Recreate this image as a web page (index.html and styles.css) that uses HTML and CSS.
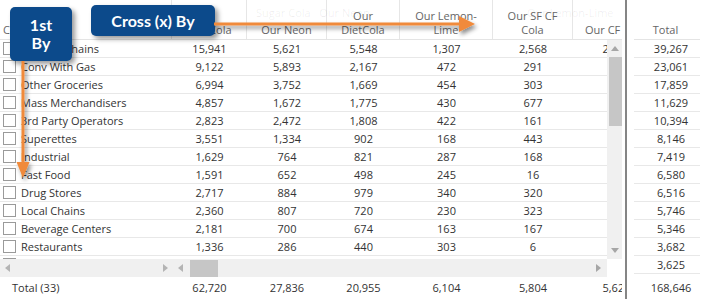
FILE: index.html
```html
<!DOCTYPE html>
<html lang="en">
<head>
  <meta charset="UTF-8" />
  <title>Channel by Brand</title>
  <link rel="stylesheet" href="styles.css">
</head>
<body>

  <div class="grid">
    <div class="pane">
      <div class="head">
        <div class="hcell first">Channel</div>
        <div class="hcell">Our Cola</div>
        <div class="hcell">Our Neon</div>
        <div class="hcell">Our<br>DietCola</div>
        <div class="hcell">Our Lemon-<br>Lime</div>
        <div class="hcell">Our SF CF<br>Cola</div>
        <div class="hcell cf">Our CF</div>
        <span class="ghost g1">Sugar Cola &nbsp; Our Neon</span>
        <span class="ghost g2">Our Lemon-Lime</span>
      </div>

      <div class="body">
        <div class="rows" id="rows"></div>
        <div class="vscroll">
          <div class="vbtn"><svg width="8" height="5"><polygon points="0,5 4,0 8,5" fill="#a6a6a6"/></svg></div>
          <div class="vthumb"></div>
          <div class="vspace"></div>
          <div class="vbtn"><svg width="8" height="5"><polygon points="0,0 8,0 4,5" fill="#a6a6a6"/></svg></div>
        </div>
      </div>

      <div class="hscroll">
        <div class="htrack frozen">
          <div class="hbtn"><svg width="5" height="8"><polygon points="5,0 5,8 0,4" fill="#b4b4b4"/></svg></div>
          <div class="hbtn"><svg width="5" height="8"><polygon points="0,0 0,8 5,4" fill="#b4b4b4"/></svg></div>
        </div>
        <div class="htrack scrolling">
          <div class="hbtn wide"><svg width="5" height="8"><polygon points="5,0 5,8 0,4" fill="#b4b4b4"/></svg></div>
          <div class="hthumb"></div>
          <div class="hspace"></div>
          <div class="hbtn wide"><svg width="5" height="8"><polygon points="0,0 0,8 5,4" fill="#a6a6a6"/></svg></div>
        </div>
      </div>

      <div class="foot" id="foot"></div>
    </div>

    <div class="divider"></div>

    <div class="totals">
      <div class="thead">Total</div>
      <div id="totalRows"></div>
      <div class="tfoot">168,646</div>
    </div>

    <!-- drop targets shown while pivoting -->
    <div class="tag tag-by">1st<br>By</div>
    <div class="tag tag-cross">Cross (x) By</div>
    <svg class="arrows" width="704" height="299">
      <defs>
        <filter id="shade" x="-20%" y="-50%" width="140%" height="200%">
          <feDropShadow dx="2" dy="3" stdDeviation="2" flood-color="#000" flood-opacity="0.45"/>
        </filter>
      </defs>
      <g filter="url(#shade)" fill="#f08a3a">
        <rect x="214" y="22.5" width="248" height="3"/>
        <polygon points="459,16 475,24 459,32"/>
        <rect x="21.5" y="61" width="3" height="104"/>
        <polygon points="16.5,162 23,178 29.5,162"/>
      </g>
    </svg>
  </div>

  <script>
    const rows = [
      ['Grocery Chains', 15941, 5621, 5548, 1307, 2568, 2614, 39267],
      ['Conv With Gas', 9122, 5893, 2167, 472, 291, 418, 23061],
      ['Other Groceries', 6994, 3752, 1669, 454, 303, 352, 17859],
      ['Mass Merchandisers', 4857, 1672, 1775, 430, 677, 415, 11629],
      ['3rd Party Operators', 2823, 2472, 1808, 422, 161, 97, 10394],
      ['Superettes', 3551, 1334, 902, 168, 443, 406, 8146],
      ['Industrial', 1629, 764, 821, 287, 168, 64, 7419],
      ['Fast Food', 1591, 652, 498, 245, 16, 112, 6580],
      ['Drug Stores', 2717, 884, 979, 340, 320, 98, 6516],
      ['Local Chains', 2360, 807, 720, 230, 323, 174, 5746],
      ['Beverage Centers', 2181, 700, 674, 163, 167, 83, 5346],
      ['Restaurants', 1336, 286, 440, 303, 6, 91, 3682],
      ['Convenience Stores', 1204, 433, 402, 215, 105, 87, 3625]
    ];
    const totals = ['Total (33)', 62720, 27836, 20955, 6104, 5804, 5625];

    const fmt = n => n.toLocaleString('en-US');
    const rowsEl = document.getElementById('rows');
    const totalRows = document.getElementById('totalRows');

    rows.forEach(r => {
      rowsEl.innerHTML += `
        <div class="row">
          <div class="name"><span class="check"></span>${r[0]}</div>
          ${r.slice(1, 7).map(v => `<div class="num">${fmt(v)}</div>`).join('')}
        </div>`;
      totalRows.innerHTML += `<div class="trow">${fmt(r[7])}</div>`;
    });

    document.getElementById('foot').innerHTML =
      `<div class="name">${totals[0]}</div>` +
      totals.slice(1).map(v => `<div class="num">${fmt(v)}</div>`).join('');
  </script>
</body>
</html>
```

FILE: styles.css
```css
* { margin: 0; padding: 0; box-sizing: border-box; }
body { background: white; font-family: 'Open Sans', sans-serif; font-size: 11px; color: #333; }

.grid {
  position: relative;
  display: flex;
  width: 704px;
  height: 299px;
  overflow: hidden;
}

.pane { width: 622px; margin-right: 3px; display: flex; flex-direction: column; }

.head, .row, .foot {
  display: grid;
  grid-template-columns: 172px 75px 80px 73px 93px 80px 87px;
}

.head {
  position: relative;
  height: 40px;
  width: 622px;
  overflow: hidden;
  border-bottom: 1px solid #e4e4e4;
  color: #666;
}

.hcell {
  display: flex;
  align-items: flex-end;
  justify-content: center;
  text-align: center;
  line-height: 14px;
  padding-bottom: 2px;
  border-right: 1px solid #e6e6e6;
  white-space: nowrap;
}
.hcell.first { justify-content: flex-start; padding-left: 3px; }
.hcell.cf { justify-content: flex-start; padding-left: 12px; border-right: none; }

.ghost { position: absolute; top: 5px; color: rgba(0,0,0,0.07); white-space: nowrap; }
.ghost.g1 { left: 256px; }
.ghost.g2 { left: 527px; }

.body { display: flex; height: 219px; }
.rows { width: 607px; overflow: hidden; }

.row {
  height: 18px;
  line-height: 17px;
  border-bottom: 1px solid #e8e8e8;
}

.name { display: flex; align-items: center; white-space: nowrap; padding-left: 3px; }
.num { text-align: center; white-space: nowrap; }

.check {
  width: 13px;
  height: 13px;
  border: 1px solid #9a9a9a;
  background: white;
  margin-right: 5px;
  flex: none;
}

.vscroll { width: 15px; background: #f0f0f0; display: flex; flex-direction: column; }
.vbtn { height: 17px; display: flex; align-items: center; justify-content: center; }
.vthumb { height: 69px; margin-left: 2px; background: #c6c6c6; }
.vspace { flex: 1; }

.hscroll { display: flex; height: 18px; }
.htrack { display: flex; align-items: center; background: #f0f0f0; height: 18px; }
.htrack.frozen { width: 172px; justify-content: space-between; }
.htrack.scrolling { width: 435px; }
.hbtn { width: 14px; height: 18px; display: flex; align-items: center; justify-content: center; }
.hbtn.wide { width: 17px; }
.hthumb { width: 28px; height: 17px; margin-left: 1px; background: #c6c6c6; }
.hspace { flex: 1; }

.foot { height: 22px; line-height: 22px; width: 622px; overflow: hidden; }
.foot .name { padding-left: 12px; }

.divider { width: 2px; background: #858585; }

.totals { width: 77px; padding: 0 4px 0 7px; }
.thead {
  height: 40px;
  display: flex;
  align-items: flex-end;
  justify-content: center;
  padding: 0 3px 2px 0;
  line-height: 14px;
  color: #666;
  border-bottom: 1px solid #e4e4e4;
}
.trow {
  height: 18px;
  line-height: 17px;
  text-align: center;
  padding-left: 8px;
  border-bottom: 1px solid #e8e8e8;
}
.tfoot { margin-top: 3px; height: 22px; line-height: 22px; text-align: center; padding-left: 8px; }

.tag {
  position: absolute;
  background: #0c4a8b;
  color: white;
  font-family: Lato, 'Open Sans', sans-serif;
  font-weight: bold;
  font-size: 16px;
  border-radius: 5px;
  box-shadow: 3px 3px 5px rgba(0,0,0,0.4);
  display: flex;
  align-items: center;
  justify-content: center;
  text-align: center;
}
.tag-by { left: 10px; top: 7px; width: 62px; height: 54px; line-height: 18px; }
.tag-cross { left: 91px; top: 5px; width: 124px; height: 31px; }

.arrows { position: absolute; left: 0; top: 0; pointer-events: none; }
```
